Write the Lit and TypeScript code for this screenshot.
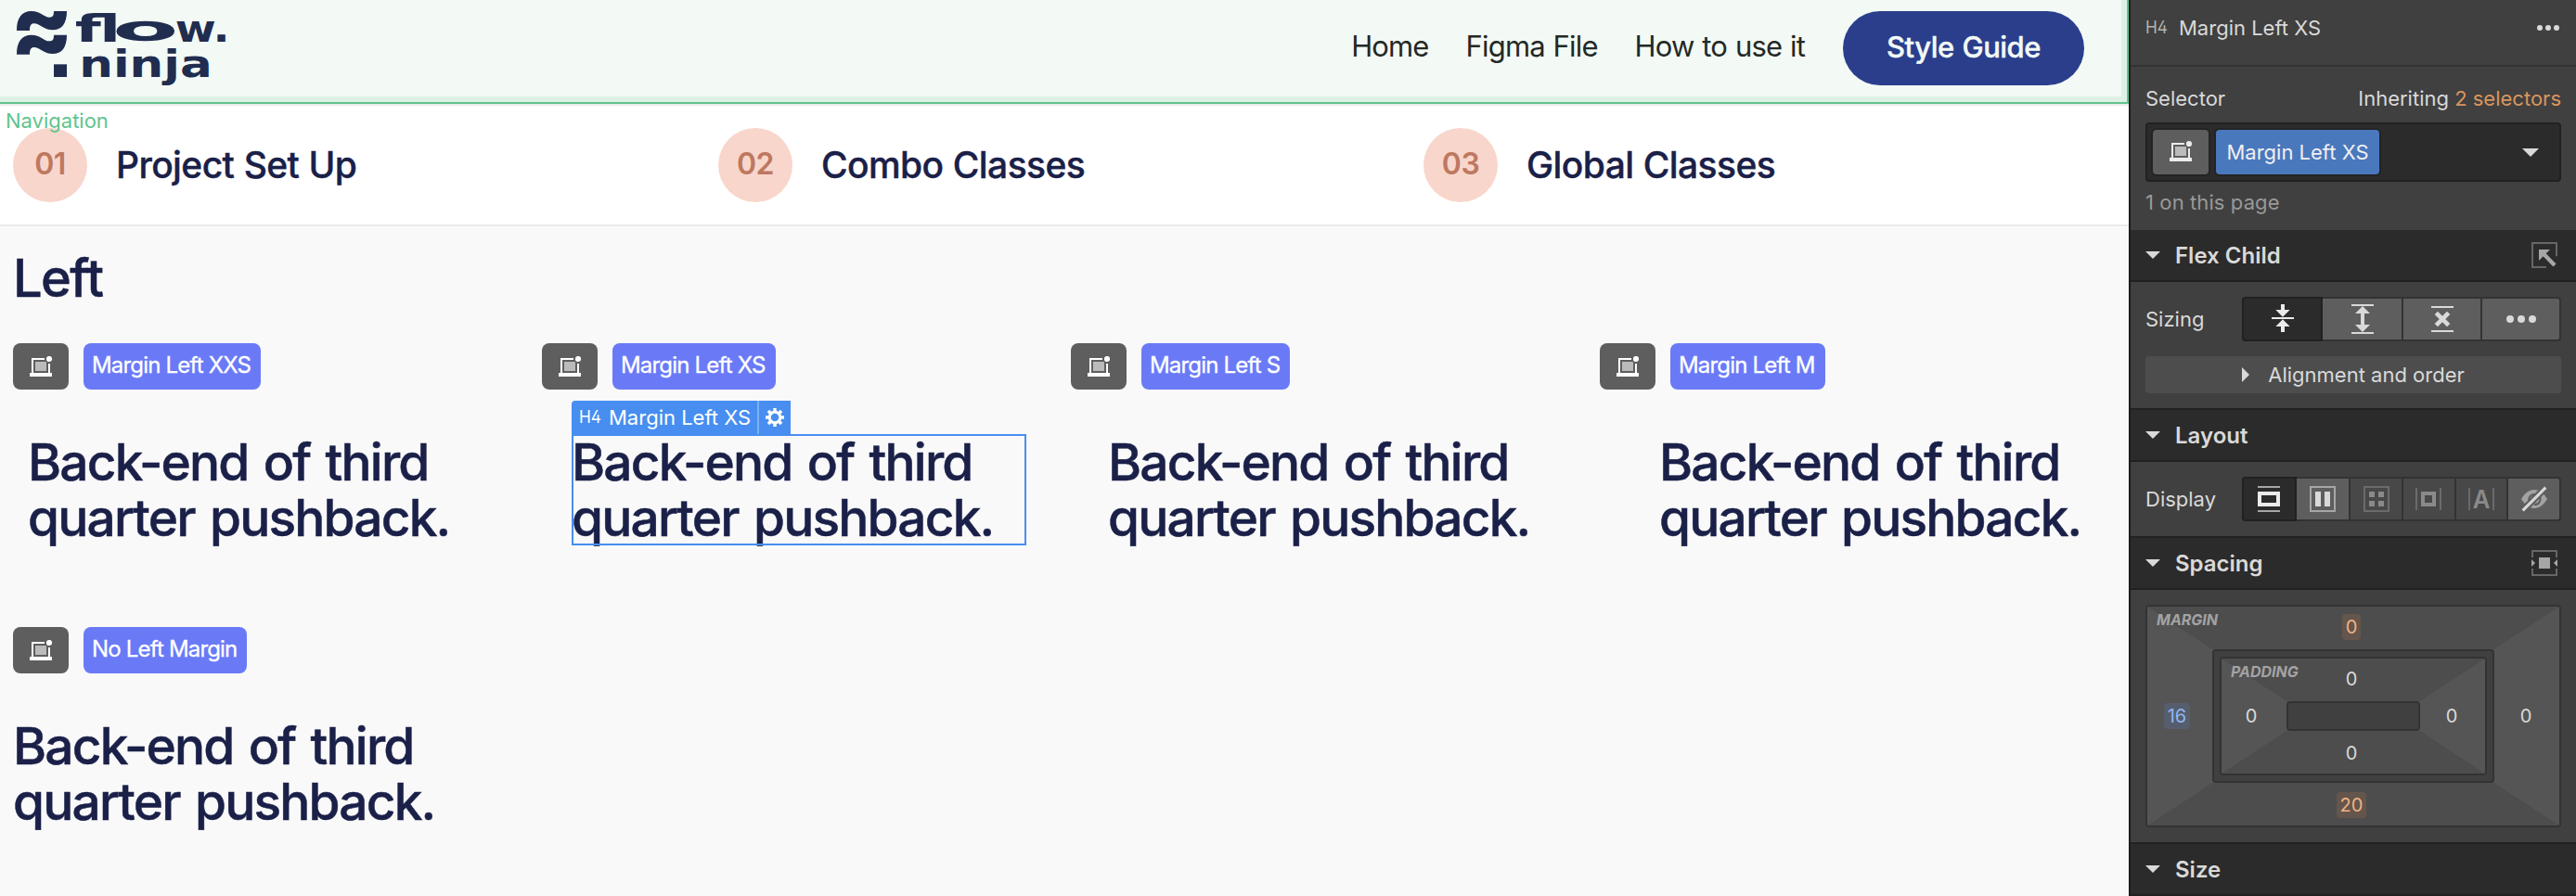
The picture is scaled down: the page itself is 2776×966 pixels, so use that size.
import {LitElement, css, html, svg} from 'lit';
import {customElement, property} from 'lit/decorators.js';
import {classMap} from 'lit/directives/class-map.js';

const elementIcon = svg`
  <svg width="24" height="22" viewBox="96 90 72 66">
    <path fill="#bbb" d="M114 108h34a11 11 0 0 0 2 2v28h-36z"/>
    <path fill="currentColor" d="M102 96h42v6h-36v42h48v-30h6v30h6v12h-72v-12h6z"/>
    <circle fill="currentColor" cx="159" cy="99" r="9.3"/>
  </svg>`;

const headingIcon = svg`
  <svg class="h4-icon" width="22" height="16" viewBox="0 0 22 16">
    <text x="-1" y="15" font-size="19" textLength="24" lengthAdjust="spacingAndGlyphs">H4</text>
  </svg>`;

const caretDown = svg`
  <svg width="16" height="8" viewBox="0 0 16 8"><path fill="currentColor" d="M0 0h16L8 8z"/></svg>`;

const gearIcon = svg`
  <svg width="20" height="20" viewBox="-10 -10 20 20" fill="none" stroke="#fff">
    <circle r="5.8" stroke-width="3"/>
    ${[0, 45, 90, 135].map((a) => svg`
      <path stroke-width="3.4" d="M0 -10V-6M0 10V6" transform="rotate(${a})"/>`)}
  </svg>`;

/**
 * A heading sample with the class tag it demonstrates above it.
 */
@customElement('class-sample')
export class ClassSample extends LitElement {
  static styles = css`
    :host {
      display: block;
      font-family: Inter, sans-serif;
    }
    .tags {
      display: flex;
      gap: 16px;
      margin-bottom: 48px;
    }
    .tile {
      display: flex;
      align-items: center;
      justify-content: center;
      width: 60px;
      height: 50px;
      border-radius: 8px;
      background: #5e5e5e;
      color: #fff;
    }
    .tag {
      box-sizing: border-box;
      height: 50px;
      padding: 0 11px 0 9px;
      border-radius: 8px;
      background: #6a7af7;
      color: #fff;
      font-size: 24px;
      line-height: 47px;
      letter-spacing: -0.82px;
      white-space: nowrap;
      -webkit-text-stroke: 0.3px;
    }
    h4 {
      position: relative;
      margin: 0 0 20px;
      color: #1a2048;
      font-size: 55px;
      font-weight: 500;
      line-height: 60px;
      letter-spacing: -1.8px;
      word-spacing: 3.4px;
      white-space: nowrap;
      -webkit-text-stroke: 0.5px;
    }

    /* Outline and label of the element picked in the designer. */

    .selected::after {
      content: "";
      position: absolute;
      inset: 0;
      border: 2px solid #478ef0;
    }
    .label {
      position: absolute;
      left: 0;
      bottom: 100%;
      display: flex;
      align-items: center;
      height: 36px;
      border-radius: 4px 0 0 0;
      background: #478ef0;
      color: #fff;
      font-size: 22px;
      font-weight: 400;
      line-height: 36px;
      letter-spacing: 0;
      word-spacing: 0;
      -webkit-text-stroke: 0;
    }
    .name {
      display: flex;
      align-items: center;
      gap: 9px;
      box-sizing: border-box;
      width: 200px;
      padding-left: 9px;
    }
    .gear {
      display: flex;
      align-items: center;
      justify-content: center;
      width: 34px;
      height: 36px;
      border-left: 2px solid #7eb0f5;
    }
    .h4-icon {
      margin-top: -3px;
      overflow: visible;
      fill: currentColor;
      font-family: Inter, sans-serif;
      font-feature-settings: "cv02";
    }
  `;

  @property() name = '';
  @property({type: Number}) offset = 0;
  @property({type: Boolean}) selected = false;

  render() {
    return html`
      <div class="tags">
        <div class="tile">${elementIcon}</div>
        <div class="tag">${this.name}</div>
      </div>
      <h4 class=${classMap({selected: this.selected})} style="margin-left: ${this.offset}px">
        Back-end of third<br>quarter pushback.
        ${this.selected ? html`
          <div class="label">
            <div class="name">${headingIcon}<span>${this.name}</span></div>
            <div class="gear">${gearIcon}</div>
          </div>` : ''}
      </h4>
    `;
  }
}

const steps = ['Project Set Up', 'Combo Classes', 'Global Classes'];

const samples = [
  {name: 'Margin Left XXS', offset: 16},
  {name: 'Margin Left XS', offset: 32, selected: true},
  {name: 'Margin Left S', offset: 40},
  {name: 'Margin Left M', offset: 64},
  {name: 'No Left Margin', offset: 0},
];

@customElement('site-canvas')
export class SiteCanvas extends LitElement {
  static styles = css`
    :host {
      display: block;
      background: #f9f9f9;
      color: #1a2048;
      font-family: Inter, sans-serif;
      overflow: hidden;
    }
    .nav-wrap {
      position: relative;
      border-bottom: 2px solid #ebebeb;
    }
    .nav {
      box-sizing: border-box;
      display: flex;
      justify-content: space-between;
      align-items: flex-start;
      height: 112px;
      padding-right: 46px;
      background: #f3f9f5;
      border: solid #60c48c;
      border-width: 0 2px 2px 0;
      box-shadow: inset -6px -6px 0 #dff1e7;
    }
    .logo {
      display: block;
      fill: #202d4f;
    }
    .logo text {
      font-family: "DejaVu Sans", sans-serif;
      font-weight: 700;
      font-size: 122px;
    }
    .logo .wide {
      font-weight: 400;
      font-size: 102px;
      stroke: #202d4f;
      stroke-width: 8px;
    }
    .links {
      display: flex;
      align-items: center;
      gap: 40px;
      height: 104px;
      color: #232926;
      font-size: 31px;
      letter-spacing: -0.85px;
      word-spacing: 1px;
      white-space: nowrap;
    }
    .link {
      padding-bottom: 6px;
    }
    .link:nth-child(3) {
      padding-right: 1px;
    }
    .button {
      box-sizing: border-box;
      width: 260px;
      height: 80px;
      border-radius: 40px;
      background: #2a3e8c;
      color: #f3f9f5;
      font-weight: 500;
      line-height: 77px;
      letter-spacing: -0.5px;
      text-align: center;
      -webkit-text-stroke: 0.4px;
    }
    .nav-label {
      position: absolute;
      left: 6px;
      top: 116px;
      color: #60c48c;
      font-size: 22px;
      line-height: 28px;
    }
    .steps {
      display: grid;
      grid-template-columns: repeat(3, 712px);
      gap: 48px;
      padding: 24px 0 24px 14px;
      border-bottom: 2px solid #ebebeb;
      background: #fff;
    }
    .step {
      display: flex;
      align-items: center;
      gap: 31px;
      font-size: 39px;
      font-weight: 500;
      letter-spacing: -0.6px;
      word-spacing: 0.6px;
      -webkit-text-stroke: 0.4px;
    }
    .title {
      padding-bottom: 1px;
    }
    .number {
      width: 80px;
      height: 80px;
      border-radius: 50%;
      background: #f8d6cb;
      color: #be7860;
      font-size: 32px;
      font-weight: 600;
      line-height: 77px;
      text-align: center;
      -webkit-text-stroke: 0;
    }
    .content {
      padding: 26px 48px 0 14px;
    }
    h2 {
      margin: 0 0 40px;
      font-size: 56px;
      font-weight: 500;
      line-height: 60px;
      letter-spacing: -1.6px;
      -webkit-text-stroke: 0.5px;
    }
    .grid {
      display: grid;
      grid-template-columns: repeat(4, 522px);
      gap: 68px 48px;
    }
  `;

  render() {
    return html`
      <div class="nav-wrap">
        <div class="nav">
          <svg class="logo" width="260" height="100" viewBox="0 0 780 300">
            <path id="wave" d="M54 99C54 60 68 36 102 36C130 36 142 56 160 56C171 56 174 50 174 36H216C216 76 200 97 170 97C142 97 128 76 110 76C100 76 96 84 96 99Z"/>
            <use href="#wave" y="77"/>
            <path d="M174 208h42v41h-42z"/>
            <text x="242" y="135" textLength="148" lengthAdjust="spacingAndGlyphs">fl</text>
            <text class="wide" x="371" y="130" textLength="198" lengthAdjust="spacingAndGlyphs">o</text>
            <text x="566" y="135" textLength="177" lengthAdjust="spacingAndGlyphs">w.</text>
            <text x="256" y="249" textLength="430" lengthAdjust="spacingAndGlyphs">ninja</text>
          </svg>
          <div class="links">
            <span class="link">Home</span>
            <span class="link">Figma File</span>
            <span class="link">How to use it</span>
            <span class="button">Style Guide</span>
          </div>
        </div>
        <span class="nav-label">Navigation</span>
      </div>
      <div class="steps">
        ${steps.map((title, i) => html`
          <div class="step">
            <div class="number">0${i + 1}</div>
            <div class="title">${title}</div>
          </div>`)}
      </div>
      <div class="content">
        <h2>Left</h2>
        <div class="grid">
          ${samples.map((s) => html`
            <class-sample .name=${s.name} .offset=${s.offset} .selected=${!!s.selected}></class-sample>`)}
        </div>
      </div>
    `;
  }
}

const sizingIcons = [
  svg`<svg width="24" height="32" viewBox="504 264 72 96" fill="#ebebeb">
    <path d="M534 264h12v18h17l-23 23-23-23h17zM504 306h72v6h-72zM534 354h12v-18h17l-23-23-23 23h17z"/>
  </svg>`,
  svg`<svg width="24" height="32" viewBox="756 264 72 96" fill="#d9d9d9">
    <path d="M756 264h72v6h-72zM756 354h72v6h-72zM792 270l24 24h-18v36h18l-24 24-24-24h18v-36h-18z"/>
  </svg>`,
  svg`<svg width="24" height="32" viewBox="1020 264 72 96" fill="#d9d9d9">
    <path d="M1020 270h72v6h-72zM1020 348h72v6h-72z"/>
    <path d="M1036 292l40 40M1076 292l-40 40" stroke="#d9d9d9" stroke-width="14"/>
  </svg>`,
  svg`<svg width="32" height="8" viewBox="0 0 96 24" fill="#d9d9d9">
    <circle cx="12" cy="12" r="12"/><circle cx="48" cy="12" r="12"/><circle cx="84" cy="12" r="12"/>
  </svg>`,
];

const displayIcons = [
  svg`<svg width="24" height="28" viewBox="456 282 72 84">
    <path fill="#a6a6a6" d="M456 282h72v6h-72zM456 360h72v6h-72z"/>
    <path fill="none" stroke="#ebebeb" stroke-width="12" d="M462 306h60v36h-60z"/>
  </svg>`,
  svg`<svg width="28" height="28" viewBox="624 282 84 84">
    <path fill="none" stroke="#a6a6a6" stroke-width="6" d="M627 285h78v78h-78z"/>
    <path fill="#d9d9d9" d="M642 300h18v48h-18zM672 300h18v48h-18z"/>
  </svg>`,
  svg`<svg width="28" height="28" viewBox="798 282 84 84">
    <path fill="none" stroke="#6b6b6b" stroke-width="6" d="M801 285h78v78h-78z"/>
    <path fill="#8a8a8a" d="M816 300h18v18h-18zM846 300h18v18h-18zM816 330h18v18h-18zM846 330h18v18h-18z"/>
  </svg>`,
  svg`<svg width="28" height="24" viewBox="966 288 84 72">
    <path fill="#6b6b6b" d="M966 288h6v72h-6zM1044 288h6v72h-6z"/>
    <path fill="none" stroke="#8a8a8a" stroke-width="12" d="M990 306h36v36h-36z"/>
  </svg>`,
  svg`<svg width="28" height="24" viewBox="1140 288 84 72">
    <path fill="#6b6b6b" d="M1140 288h6v72h-6zM1218 288h6v72h-6z"/>
    <text x="1182" y="354" text-anchor="middle" font-size="82" font-weight="600"
      textLength="56" lengthAdjust="spacingAndGlyphs" fill="#8a8a8a">A</text>
  </svg>`,
  svg`<svg width="28" height="26" viewBox="1314 285 84 78">
    <path fill="#a3a3a3" d="M1314 324C1326 304 1340 294 1356 294S1386 304 1398 324C1386 344 1372 354 1356 354S1326 344 1314 324z"/>
    <path fill="none" stroke="#5e5e5e" stroke-width="6" d="M1341 336A18 18 0 0 1 1356 309M1371 312A18 18 0 0 1 1356 342"/>
    <path stroke="#5e5e5e" stroke-width="22" d="M1316 364L1396 284"/>
    <path stroke="#d9d9d9" stroke-width="9" d="M1319 361L1393 287"/>
  </svg>`,
];

const flexChildIcon = svg`
  <svg width="28" height="28" viewBox="1344 66 84 84">
    <path fill="none" stroke="#666" stroke-width="6" d="M1425 112V69H1347V147H1392"/>
    <path fill="#a6a6a6" d="M1368 90h36l-36 36z"/>
    <path stroke="#a6a6a6" stroke-width="13" d="M1384 105l35 36"/>
  </svg>`;

const spacingIcon = svg`
  <svg width="28" height="28" viewBox="1344 492 84 84">
    <path fill="none" stroke="#666" stroke-width="6" d="M1347 516V495H1425V516M1347 552V573H1425V552"/>
    <path fill="#a6a6a6" d="M1368 516h36v36h-36zM1344 522l12 12-12 12zM1428 522l-12 12 12 12z"/>
  </svg>`;

@customElement('style-panel')
export class StylePanel extends LitElement {
  static styles = css`
    :host {
      box-sizing: border-box;
      display: block;
      border-left: 2px solid #1c1c1c;
      background: #404040;
      color: #d9d9d9;
      font-family: Inter, sans-serif;
      font-size: 22px;
      white-space: nowrap;
    }
    svg {
      display: block;
      flex: none;
      overflow: visible;
      font-family: Inter, sans-serif;
    }
    .top {
      display: flex;
      align-items: center;
      height: 60px;
      padding: 0 18px 10px 17px;
      border-bottom: 2px solid #333;
    }
    .top span {
      flex: 1;
      margin-left: 13px;
    }
    .h4-icon {
      margin-top: -3px;
      fill: #b3b3b3;
      font-feature-settings: "cv02";
    }
    .selector {
      box-sizing: border-box;
      height: 176px;
      padding: 0 16px;
    }
    .row {
      display: flex;
      align-items: center;
      justify-content: space-between;
      height: 52px;
      padding-top: 8px;
    }
    .orange {
      color: #d9955f;
    }
    .input {
      box-sizing: border-box;
      display: flex;
      align-items: center;
      gap: 8px;
      height: 64px;
      padding: 0 22px 0 6px;
      border: 2px solid #212121;
      border-radius: 4px;
      background: #2b2b2b;
    }
    .tile {
      display: flex;
      align-items: center;
      justify-content: center;
      width: 60px;
      height: 46px;
      padding-bottom: 2px;
      border-radius: 4px;
      background: #5e5e5e;
      color: #ebebeb;
      box-shadow: 0 0 0 2px #242424;
    }
    .pill {
      box-sizing: border-box;
      width: 176px;
      height: 48px;
      margin-right: auto;
      border-radius: 4px;
      background: #4a78bd;
      color: #f0f0f0;
      line-height: 49px;
      text-align: center;
      box-shadow: 0 0 0 2px #242424;
    }
    .count {
      color: #999;
      line-height: 45px;
      letter-spacing: 0.1px;
    }
    .head {
      display: flex;
      align-items: center;
      gap: 16px;
      height: 54px;
      padding: 0 20px 0 16px;
      border: solid #212121;
      border-width: 2px 0;
      background: #2b2b2b;
      font-size: 24px;
      font-weight: 600;
    }
    .head.first {
      border-top: 0;
    }
    .head span {
      flex: 1;
    }
    .body {
      padding: 16px;
    }
    .field {
      display: flex;
      align-items: center;
    }
    .field label {
      width: 104px;
    }
    .group {
      box-sizing: border-box;
      display: grid;
      grid-auto-flow: column;
      grid-auto-columns: minmax(0, 1fr);
      flex: 1;
      height: 48px;
      border: 2px solid #333;
      border-radius: 4px;
      background: #5e5e5e;
    }
    .cell {
      box-sizing: border-box;
      display: flex;
      align-items: center;
      justify-content: center;
      border-left: 2px solid #333;
    }
    .cell:nth-child(2) {
      border-left: 0;
    }
    .cell.on {
      margin: -2px 0 -2px -2px;
      border: 2px solid #212121;
      border-radius: 4px 0 0 4px;
      background: #2b2b2b;
    }
    .cell.off {
      background: #484848;
    }
    .more {
      display: flex;
      align-items: center;
      justify-content: center;
      gap: 20px;
      height: 40px;
      margin-top: 16px;
      border-radius: 4px;
      background: #4d4d4d;
    }

    /* Margin and padding boxes. The svg shades the left and right sides. */

    .box {
      position: relative;
      display: grid;
      grid-template-columns: 70px 1fr 70px;
      grid-template-rows: 46px 1fr 46px;
      border: 2px solid #333;
      border-radius: 4px;
      background: #4d4d4d;
      font-size: 20px;
    }
    .margin {
      height: 236px;
    }
    .inner {
      position: relative;
      padding: 6px;
      border: 2px solid #333;
      border-radius: 4px;
      background: #404040;
      grid-area: 2 / 2;
    }
    .padding {
      height: 124px;
    }
    .core {
      position: relative;
      border: 2px solid #333;
      border-radius: 4px;
      background: #404040;
      grid-area: 2 / 2;
    }
    .shade {
      position: absolute;
      inset: 0;
      fill: #555;
    }
    .title {
      position: absolute;
      left: 10px;
      top: 4px;
      color: #a3a3a3;
      font-size: 16px;
      font-style: italic;
      font-weight: 700;
      line-height: 20px;
    }
    .value {
      position: relative;
      justify-self: center;
      align-self: center;
      height: 28px;
      padding: 0 4px;
      border-radius: 4px;
      line-height: 29px;
    }
    .t {
      grid-area: 1 / 2;
      margin: 0 4px 2px 0;
    }
    .l {
      grid-area: 2 / 1;
      margin-right: 6px;
    }
    .r {
      grid-area: 2 / 3;
      margin-right: 2px;
    }
    .b {
      grid-area: 3 / 2;
      margin: 2px 4px 0 0;
    }
    .inherited {
      background: #64564c;
      color: #f0b083;
    }
    .own {
      background: #565e6d;
      color: #8fb5f5;
    }
  `;

  head(title: string, icon: unknown = '', first = false) {
    return html`
      <div class=${classMap({head: true, first})}>${caretDown}<span>${title}</span>${icon}</div>`;
  }

  group(icons: unknown[], disabled: number[] = []) {
    return html`
      <div class="group">
        ${icons.map((icon, i) => html`
          <div class=${classMap({cell: true, on: i === 0, off: disabled.includes(i)})}>${icon}</div>`)}
      </div>`;
  }

  render() {
    return html`
      <div class="top">
        ${headingIcon}<span>Margin Left XS</span>
        <svg width="24" height="6" viewBox="0 0 24 6" fill="#d9d9d9">
          <circle cx="3" cy="3" r="3"/><circle cx="12" cy="3" r="3"/><circle cx="21" cy="3" r="3"/>
        </svg>
      </div>
      <div class="selector">
        <div class="row">
          <span>Selector</span>
          <span>Inheriting <span class="orange">2 selectors</span></span>
        </div>
        <div class="input">
          <div class="tile">${elementIcon}</div>
          <div class="pill">Margin Left XS</div>
          <svg width="18" height="9" viewBox="0 0 18 9"><path fill="#d9d9d9" d="M0 0h18L9 9z"/></svg>
        </div>
        <div class="count">1 on this page</div>
      </div>
      ${this.head('Flex Child', flexChildIcon, true)}
      <div class="body">
        <div class="field"><label>Sizing</label>${this.group(sizingIcons)}</div>
        <div class="more">
          <svg width="8" height="16" viewBox="0 0 8 16"><path fill="#d9d9d9" d="M0 0l8 8-8 8z"/></svg>
          Alignment and order
        </div>
      </div>
      ${this.head('Layout')}
      <div class="body">
        <div class="field"><label>Display</label>${this.group(displayIcons, [2, 3, 4])}</div>
      </div>
      ${this.head('Spacing', spacingIcon)}
      <div class="body">
        <div class="box margin">
          <svg class="shade" width="444" height="236">
            <path d="M0 0l72 47v142L0 236zM444 0l-72 47v142l72 47z"/>
          </svg>
          <span class="title">MARGIN</span>
          <span class="value t inherited">0</span>
          <span class="value l own">16</span>
          <div class="inner">
            <div class="box padding">
              <svg class="shade" width="284" height="124">
                <path d="M0 0l72 47v30L0 124zM284 0l-72 47v30l72 47z"/>
              </svg>
              <span class="title">PADDING</span>
              <span class="value t">0</span>
              <span class="value l">0</span>
              <div class="core"></div>
              <span class="value r">0</span>
              <span class="value b">0</span>
            </div>
          </div>
          <span class="value r">0</span>
          <span class="value b inherited">20</span>
        </div>
      </div>
      ${this.head('Size')}
    `;
  }
}

@customElement('app-root')
export class AppRoot extends LitElement {
  static styles = css`
    :host {
      display: grid;
      grid-template-columns: 1fr 482px;
      height: 966px;
      overflow: hidden;
    }
  `;

  render() {
    return html`
      <site-canvas></site-canvas>
      <style-panel></style-panel>
    `;
  }
}

declare global {
  interface HTMLElementTagNameMap {
    'app-root': AppRoot;
    'class-sample': ClassSample;
    'site-canvas': SiteCanvas;
    'style-panel': StylePanel;
  }
}
